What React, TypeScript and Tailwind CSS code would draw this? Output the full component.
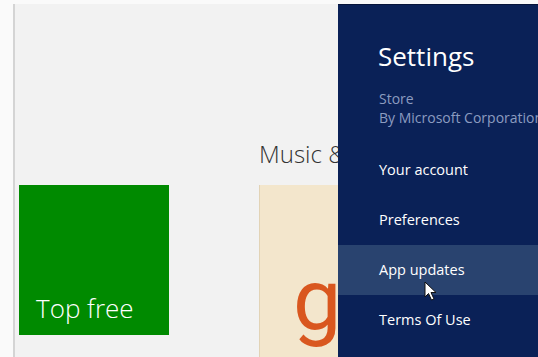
const menu = ["Your account", "Preferences", "App updates", "Terms Of Use"];

const Cursor = () => (
  <svg width="14" height="20" viewBox="0 0 14 20" className="absolute left-[86px] top-[276px]">
    <path d="M1 1 L1 16 L4.5 12.5 L7.5 19 L10 18 L7 11.5 L12 11.5 Z" fill="#ffffff" stroke="#111111" strokeWidth="1" />
  </svg>
);

export default function App() {
  return (
    <div
      className="w-[538px] h-[357px] overflow-hidden bg-[#fafafa] pt-[4px] pl-[13px]"
      style={{ fontFamily: '"Open Sans", "Noto Sans", sans-serif' }}
    >
      <div className="relative h-full bg-[#f2f2f2] border-l-2 border-[#d4d4d4]">
        <div className="flex pl-[4px] pt-[133px]">
          <div className="mt-[48px] w-[150px] h-[150px] bg-[#008a00] flex items-end px-[17px] pb-[10px]">
            <span className="text-[26px] font-light text-white leading-none pb-[4px]">Top free</span>
          </div>
          <div className="ml-[90px]">
            <div className="h-[48px] text-[24px] font-light text-[#333333] leading-[34px]">Music &amp; Video</div>
            <div className="w-[200px] h-[200px] bg-[#f3e6cc] border-l border-[#e2d3b6] pl-[33px] pt-[72px]">
              <span
                className="text-[86px] text-[#d9571f] font-normal leading-none"
                style={{ fontFamily: 'Roboto, Inter, sans-serif' }}
              >
                g
              </span>
            </div>
          </div>
        </div>

        <div className="absolute top-0 bottom-0 left-[323px] right-0 bg-[#0a2157] border-t border-[#06143a] text-white">
          <div className="relative pt-[33px]">
            <div className="pl-[40px] text-[26px] leading-[36px] font-normal whitespace-nowrap">Settings</div>
            <div className="pl-[41px] mt-[15px] text-[14px] leading-[19px] text-[#8c9cc0] whitespace-nowrap">
              <div>Store</div>
              <div>By Microsoft Corporation</div>
            </div>
            <div className="mt-[18px]">
              {menu.map((m) => (
                <div
                  key={m}
                  className={`h-[50px] flex items-center pl-[41px] text-[14.5px] whitespace-nowrap ${
                    m === "App updates" ? "bg-[#29436f]" : ""
                  }`}
                >
                  {m}
                </div>
              ))}
            </div>
            <Cursor />
          </div>
        </div>
      </div>
    </div>
  );
}
